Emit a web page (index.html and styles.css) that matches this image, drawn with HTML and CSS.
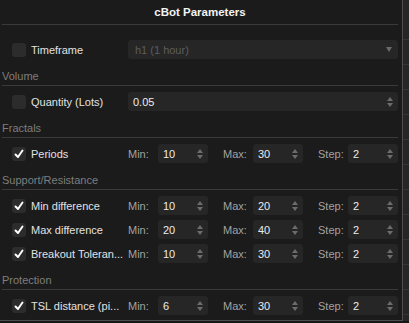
FILE: index.html
```html
<!DOCTYPE html>
<html lang="en">

<head>
  <meta charset="UTF-8" />
  <meta name="viewport" content="width=device-width, initial-scale=1.0" />
  <title>cBot Parameters</title>
  <link rel="stylesheet" href="styles.css">
</head>

<body>
  <div class="screen">
    <div class="panel">
      <div class="title">cBot Parameters</div>

      <div class="rows first">
        <div class="row">
          <span class="check"></span>
          <span class="label">Timeframe</span>
          <div class="field select disabled">
            <span>h1 (1 hour)</span>
            <span class="drop"></span>
          </div>
        </div>
      </div>

      <div class="section">
        <div class="section-head">Volume</div>
        <div class="rows">
          <div class="row">
            <span class="check"></span>
            <span class="label">Quantity (Lots)</span>
            <div class="field">
              <span>0.05</span>
              <span class="spin"><i class="up"></i><i class="down"></i></span>
            </div>
          </div>
        </div>
      </div>

      <div class="section">
        <div class="section-head">Fractals</div>
        <div class="rows">
          <div class="row">
            <span class="check on"><svg viewBox="0 0 14 14"><polyline points="3.5,7.5 6,10 10.5,3.5" /></svg></span>
            <span class="label">Periods</span>
            <div class="range">
              <span class="rlabel">Min:</span>
              <div class="field"><span>10</span><span class="spin"><i class="up"></i><i class="down"></i></span></div>
              <span class="rlabel">Max:</span>
              <div class="field"><span>30</span><span class="spin"><i class="up"></i><i class="down"></i></span></div>
              <span class="rlabel">Step:</span>
              <div class="field"><span>2</span><span class="spin"><i class="up"></i><i class="down"></i></span></div>
            </div>
          </div>
        </div>
      </div>

      <div class="section">
        <div class="section-head">Support/Resistance</div>
        <div class="rows">
          <div class="row">
            <span class="check on"><svg viewBox="0 0 14 14"><polyline points="3.5,7.5 6,10 10.5,3.5" /></svg></span>
            <span class="label">Min difference</span>
            <div class="range">
              <span class="rlabel">Min:</span>
              <div class="field"><span>10</span><span class="spin"><i class="up"></i><i class="down"></i></span></div>
              <span class="rlabel">Max:</span>
              <div class="field"><span>20</span><span class="spin"><i class="up"></i><i class="down"></i></span></div>
              <span class="rlabel">Step:</span>
              <div class="field"><span>2</span><span class="spin"><i class="up"></i><i class="down"></i></span></div>
            </div>
          </div>
          <div class="row">
            <span class="check on"><svg viewBox="0 0 14 14"><polyline points="3.5,7.5 6,10 10.5,3.5" /></svg></span>
            <span class="label">Max difference</span>
            <div class="range">
              <span class="rlabel">Min:</span>
              <div class="field"><span>20</span><span class="spin"><i class="up"></i><i class="down"></i></span></div>
              <span class="rlabel">Max:</span>
              <div class="field"><span>40</span><span class="spin"><i class="up"></i><i class="down"></i></span></div>
              <span class="rlabel">Step:</span>
              <div class="field"><span>2</span><span class="spin"><i class="up"></i><i class="down"></i></span></div>
            </div>
          </div>
          <div class="row">
            <span class="check on"><svg viewBox="0 0 14 14"><polyline points="3.5,7.5 6,10 10.5,3.5" /></svg></span>
            <span class="label" title="Breakout Tolerance">Breakout Toleran...</span>
            <div class="range">
              <span class="rlabel">Min:</span>
              <div class="field"><span>10</span><span class="spin"><i class="up"></i><i class="down"></i></span></div>
              <span class="rlabel">Max:</span>
              <div class="field"><span>30</span><span class="spin"><i class="up"></i><i class="down"></i></span></div>
              <span class="rlabel">Step:</span>
              <div class="field"><span>2</span><span class="spin"><i class="up"></i><i class="down"></i></span></div>
            </div>
          </div>
        </div>
      </div>

      <div class="section">
        <div class="section-head">Protection</div>
        <div class="rows">
          <div class="row">
            <span class="check on"><svg viewBox="0 0 14 14"><polyline points="3.5,7.5 6,10 10.5,3.5" /></svg></span>
            <span class="label" title="TSL distance (pips)">TSL distance (pi...</span>
            <div class="range">
              <span class="rlabel">Min:</span>
              <div class="field"><span>6</span><span class="spin"><i class="up"></i><i class="down"></i></span></div>
              <span class="rlabel">Max:</span>
              <div class="field"><span>30</span><span class="spin"><i class="up"></i><i class="down"></i></span></div>
              <span class="rlabel">Step:</span>
              <div class="field"><span>2</span><span class="spin"><i class="up"></i><i class="down"></i></span></div>
            </div>
          </div>
        </div>
      </div>
    </div>

    <div class="backdrop"></div>
  </div>
</body>

</html>
```

FILE: styles.css
```css
* {
  box-sizing: border-box;
}

body {
  margin: 0;
  padding: 0;
  font-family: 'Liberation Sans', Arial, sans-serif;
  font-size: 11px;
  background-color: #161616;
  color: #dedede;
}

.screen {
  display: flex;
  width: 409px;
  height: 323px;
  overflow: hidden;
}

.panel {
  width: 403px;
  height: 321px;
  flex-shrink: 0;
  padding: 0 4px 0 2px;
  background-color: #1b1b1b;
  border-right: 1px solid #4e4e4e;
  border-bottom: 1px solid #4e4e4e;
}

.backdrop {
  flex: 1;
  height: 321px;
  background-color: #262626;
  background-image: repeating-linear-gradient(to bottom, transparent 0, transparent 24px, #353535 24px, #353535 25px);
  background-position: 0 15px;
}

.title {
  height: 25px;
  line-height: 24px;
  text-align: center;
  font-size: 11.5px;
  font-weight: bold;
  color: #f2f2f2;
  border-bottom: 1px solid #3a3a3a;
}

.rows {
  display: flex;
  flex-direction: column;
  gap: 5px;
  padding-top: 6px;
}

.rows.first {
  padding-top: 15px;
}

.section {
  margin-top: 10px;
}

.section-head {
  height: 17px;
  line-height: 15px;
  color: #7e7e7e;
  border-bottom: 1px solid #3a3a3a;
}

.row {
  display: flex;
  align-items: center;
  height: 19px;
}

.check {
  width: 14px;
  height: 14px;
  margin-left: 10px;
  border-radius: 3px;
  background-color: #2c2c2c;
  flex-shrink: 0;
}

.check svg {
  display: block;
  width: 14px;
  height: 14px;
  fill: none;
  stroke: #ffffff;
  stroke-width: 2;
  stroke-linecap: round;
  stroke-linejoin: round;
}

.label {
  width: 97px;
  margin-left: 5px;
  padding-right: 1px;
  white-space: nowrap;
  overflow: hidden;
  color: #e2e2e2;
  flex-shrink: 0;
}

.field {
  flex: 1;
  height: 19px;
  display: flex;
  align-items: center;
  justify-content: space-between;
  padding: 0 5px;
  border-radius: 3px;
  background-color: #262626;
  color: #ececec;
}

.select.disabled {
  padding-left: 7px;
  color: #5c5c5c;
}

.drop {
  width: 0;
  height: 0;
  margin-right: 1px;
  border-left: 3px solid transparent;
  border-right: 3px solid transparent;
  border-top: 5px solid #6a6a6a;
}

.spin {
  display: flex;
  flex-direction: column;
  gap: 2px;
}

.spin i {
  display: block;
  width: 0;
  height: 0;
  border-left: 3px solid transparent;
  border-right: 3px solid transparent;
}

.spin .up {
  border-bottom: 4px solid #6c6c6c;
}

.spin .down {
  border-top: 4px solid #6c6c6c;
}

.range {
  flex: 1;
  display: flex;
  align-items: center;
}

.range .rlabel {
  width: 30px;
  color: #a2a2a2;
}

.range .rlabel:not(:first-child) {
  margin-left: 15px;
}

.range .field {
  flex: none;
  width: 50px;
}
```
